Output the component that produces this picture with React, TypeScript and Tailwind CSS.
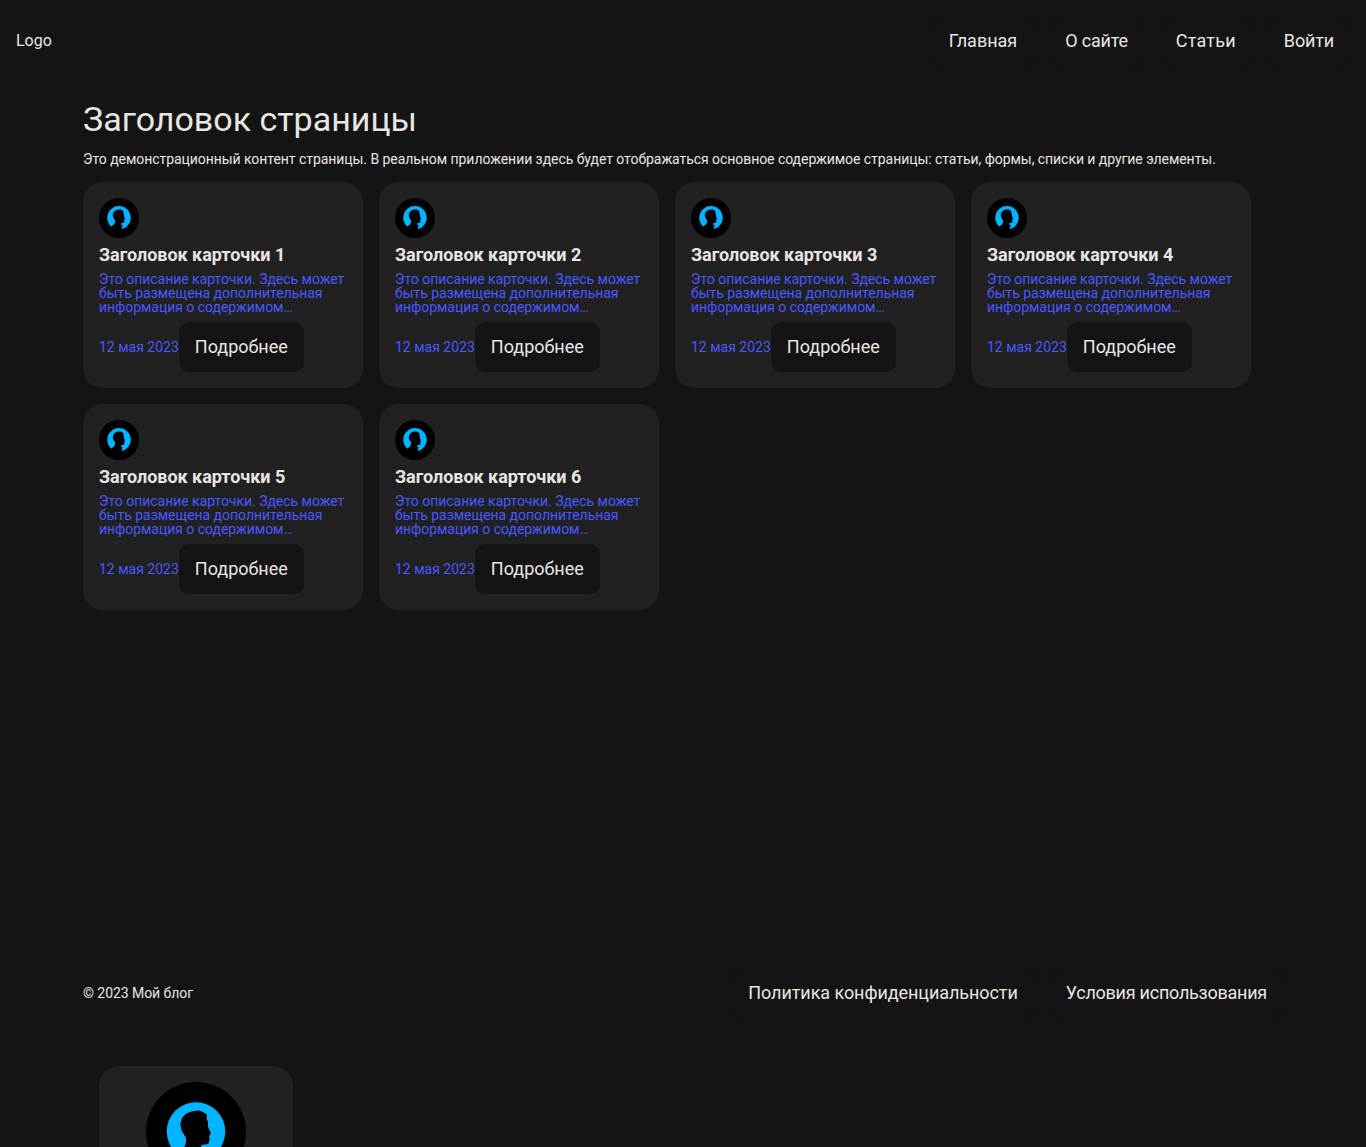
const navLinks = [
  { label: 'Главная', tracking: '' },
  { label: 'О сайте', tracking: 'tracking-[-0.2px]' },
  { label: 'Статьи', tracking: 'tracking-[0.22px]' },
  { label: 'Войти', tracking: 'tracking-[-0.15px]' },
];
const footerLinks = [
  { label: 'Политика конфиденциальности', tracking: 'tracking-[-0.07px]' },
  { label: 'Условия использования', tracking: 'tracking-[-0.25px]' },
];
const cards = [1, 2, 3, 4, 5, 6];

function Avatar({ className }: { className: string }) {
  return (
    <svg viewBox="0 0 100 100" className={`block shrink-0 rounded-full bg-black ${className}`}>
      <circle cx="50" cy="49.5" r="29.3" fill="#00b4ff" />
      <path
        d="M44 30 L48 29 L53.3 28.5 L57 30 L60.7 32.3 L60.8 37.5 L62 40 L62 45 L65 51.3 L63.2 54 L63.6 58 L62.3 62 L55 63 L55.5 66 L59 69 L57 74 L58.5 82 L34 82 L29.5 73 L38.3 65 L40 61 L40 55.7 L35.7 49 L34.3 42.3 L36 36 L40 31.7 Z"
        fill="#000"
      />
    </svg>
  );
}

function LinkButton({ label, className = '' }: { label: string; className?: string }) {
  return (
    <a className={`flex h-[50px] items-center rounded-[10px] bg-[#141414] px-4 text-[18px] leading-[18px] ${className}`}>
      {label}
    </a>
  );
}

function Card({ index }: { index: number }) {
  return (
    <article className="flex w-[280px] flex-col gap-2 rounded-[20px] bg-[#212121] p-4">
      <Avatar className="size-10" />
      <h2 className="text-[18px] leading-[18px] font-bold tracking-[-0.04px]">Заголовок карточки {index}</h2>
      <p className="text-[14px] leading-[14px] tracking-[-0.03px] text-[#4759ff]">
        Это описание карточки. Здесь может быть размещена дополнительная информация о содержимом…
      </p>
      <div className="flex items-center">
        <span className="text-[14px] leading-[14px] whitespace-nowrap text-[#4759ff]">12 мая 2023</span>
        <LinkButton label="Подробнее" />
      </div>
    </article>
  );
}

export default function App() {
  return (
    <div className="flex h-[1147px] flex-col overflow-hidden bg-[#141414] font-[Roboto,sans-serif] text-[#e8e6e3]">
      <header className="flex shrink-0 items-center justify-between p-4">
        <span className="text-[16px] leading-4">Logo</span>
        <nav className="flex gap-4">
          {navLinks.map(({ label, tracking }) => (
            <LinkButton key={label} label={label} className={tracking} />
          ))}
        </nav>
      </header>
      <main className="mx-auto flex h-[870px] w-[1200px] shrink-0 flex-col gap-4 pt-5">
        <h1 className="text-[34px] leading-[34px]">Заголовок страницы</h1>
        <p className="text-[14px] leading-[14px] tracking-[-0.054px]">
          Это демонстрационный контент страницы. В реальном приложении здесь будет отображаться основное содержимое
          страницы: статьи, формы, списки и другие элементы.
        </p>
        <div className="flex flex-wrap gap-4">
          {cards.map((index) => (
            <Card key={index} index={index} />
          ))}
        </div>
      </main>
      <footer className="mx-auto flex w-[1200px] shrink-0 items-center justify-between pt-4">
        <span className="text-[14px] leading-[14px] tracking-[-0.06px]">© 2023 Мой блог</span>
        <nav className="flex gap-4">
          {footerLinks.map(({ label, tracking }) => (
            <LinkButton key={label} label={label} className={tracking} />
          ))}
        </nav>
      </footer>
      <section className="mx-auto mt-12 w-[1200px] shrink-0 px-4">
        <div className="flex h-[206px] w-[194px] justify-center rounded-[20px] bg-[#212121] p-4">
          <Avatar className="size-[100px]" />
        </div>
      </section>
    </div>
  );
}
